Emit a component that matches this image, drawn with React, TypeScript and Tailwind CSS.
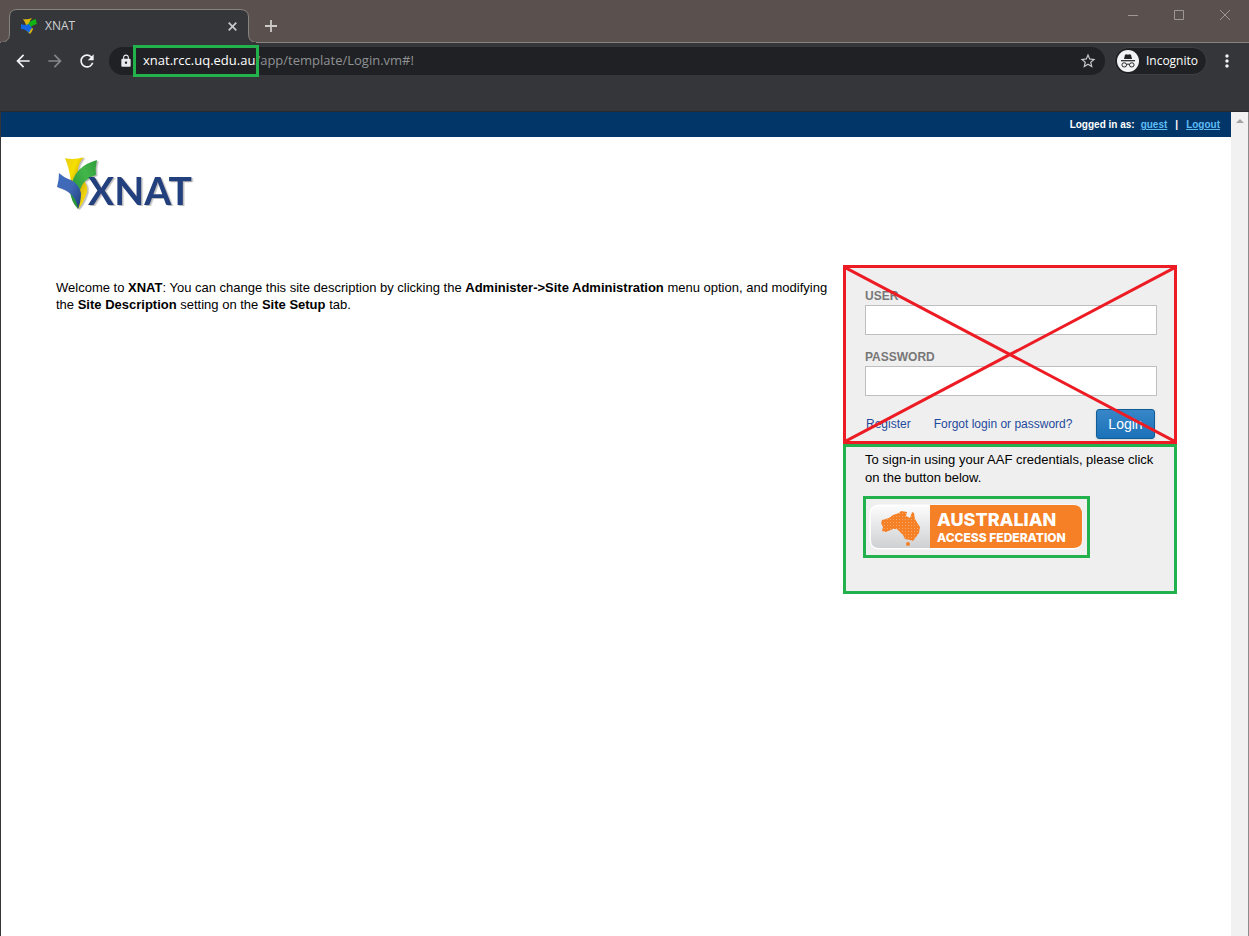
import { MdArrowBack, MdArrowForward, MdLock, MdMoreVert, MdRefresh, MdStarBorder } from "react-icons/md";

function Favicon() {
  return (
    <svg width="16" height="16" viewBox="0 0 16 16" aria-hidden="true">
      <path d="M2 1 Q6 2 11 0 Q8 3 8 7 L5 7 Q4 4 2 1Z" fill="#d9b310" />
      <path d="M8 10 Q12 9 12 11 Q11 14 9 16 Q6 14 5 11Z" fill="#d9b310" />
      <path d="M5 10 Q7 3 15 1 Q15 5 16 6 Q11 7 9 10 L8 14 Q5 13 5 10Z" fill="#12b312" />
      <path d="M0 6 Q4 8 8 6 Q9 8 11 10 Q9 12 8 15 Q5 11 0 11Z" fill="#1565e0" />
    </svg>
  );
}

function TabStrip() {
  return (
    <div className="flex h-[43px] items-stretch border-b border-[#878380] bg-[#5a514e]">
      <div className="relative ml-2 flex w-60 items-center pt-2.5 pr-2 pl-3">
        <svg className="absolute top-2 -left-2" width="257" height="35" viewBox="0 0 257 35" aria-hidden="true">
          <path
            d="M0 34.500 Q9.500 34.500 9.500 26 L9.500 9 Q9.500 1.500 17 1.500 L240 1.500 Q248.500 1.500 248.500 9 L248.500 26 Q248.500 34.500 257 34.500"
            fill="#35363a"
            stroke="#878380"
          />
          <path d="M1 35 H256" stroke="#35363a" strokeWidth="2" />
        </svg>
        <div className="relative flex w-full items-center gap-2 pl-px">
          <Favicon />
          <span className="flex-1 text-xs text-[#d0d1d3]">XNAT</span>
          <button aria-label="Close tab" className="flex size-4 items-center justify-center text-[#c8c9cb]">
            <svg width="9" height="9" viewBox="0 0 9 9" aria-hidden="true">
              <path d="M.7 .7 L8.300 8.300 M8.300 .7 L.7 8.300" stroke="currentColor" strokeWidth="1.700" />
            </svg>
          </button>
        </div>
      </div>
      <button aria-label="New tab" className="flex w-[46px] items-center justify-center pt-2.5 text-[#cccac9]">
        <svg width="12" height="12" viewBox="0 0 12 12" aria-hidden="true">
          <path d="M6 0 V12 M0 6 H12" stroke="currentColor" strokeWidth="1.800" />
        </svg>
      </button>
      <div className="mr-px ml-auto flex h-[30px] text-[#9d9795]">
        <button aria-label="Minimize" className="flex w-[46px] items-center justify-center">
          <svg width="10" height="10" viewBox="0 0 10 10" aria-hidden="true">
            <path d="M0 5.500 H10" stroke="currentColor" />
          </svg>
        </button>
        <button aria-label="Maximize" className="flex w-[46px] items-center justify-center">
          <svg width="10" height="10" viewBox="0 0 10 10" aria-hidden="true">
            <path d="M.5 .5 H9.500 V9.500 H.5Z" fill="none" stroke="currentColor" />
          </svg>
        </button>
        <button aria-label="Close window" className="flex w-[46px] items-center justify-center">
          <svg width="10" height="10" viewBox="0 0 10 10" aria-hidden="true">
            <path d="M0 0 L10 10 M10 0 L0 10" stroke="currentColor" />
          </svg>
        </button>
      </div>
    </div>
  );
}

function Toolbar() {
  return (
    <div className="flex h-[69px] items-start border-b border-[#29292c] bg-[#35363a] pt-1 pr-1.5 pl-[7px]">
      <button aria-label="Back" className="flex h-7 w-8 items-center justify-center text-[#f1f3f4]">
        <MdArrowBack size={20} />
      </button>
      <button aria-label="Forward" className="flex h-7 w-8 items-center justify-center text-[#85868a]">
        <MdArrowForward size={20} />
      </button>
      <button aria-label="Reload" className="flex h-7 w-8 items-center justify-center text-[#f1f3f4]">
        <MdRefresh size={20} />
      </button>
      <div className="ml-1.5 flex h-7 flex-1 items-center rounded-full bg-[#202124] pr-2 pl-2.5 text-[13px]">
        <MdLock size={14} className="mr-2.5 text-[#e8eaed]" />
        <span className="relative text-white">
          xnat.rcc.uq.edu.au
          <span className="pointer-events-none absolute -inset-y-1.5 -right-1 -left-2.5 border-3 border-[#22b14c]" />
        </span>
        <span className="text-[#8f9194]">/app/template/Login.vm#!</span>
        <button aria-label="Bookmark this page" className="ml-auto text-[#c6c8cb]">
          <MdStarBorder size={18} />
        </button>
      </div>
      <button className="ml-[9px] flex h-7 items-center gap-[7px] rounded-full border border-[#3f4044] bg-[#202124] pr-2 pl-0.5 text-xs text-white">
        <svg width="22" height="22" viewBox="0 0 22 22" aria-hidden="true">
          <circle cx="11" cy="11" r="11" fill="#f1f3f4" />
          <path d="M7 9 L8 4.800 Q9.500 4 11 4.700 Q12.500 4 14 4.800 L15 9Z" fill="#202124" />
          <path d="M4 10.700 H18" stroke="#202124" strokeWidth="1.200" />
          <rect x="5" y="12.900" width="4.500" height="4" rx="1.800" fill="none" stroke="#202124" />
          <rect x="12.500" y="12.900" width="4.500" height="4" rx="1.800" fill="none" stroke="#202124" />
          <path d="M9.500 14.500 Q11 13.500 12.500 14.500" fill="none" stroke="#202124" />
        </svg>
        Incognito
      </button>
      <button aria-label="Browser menu" className="ml-1 flex h-7 w-8 items-center justify-center text-[#f1f3f4]">
        <MdMoreVert size={20} />
      </button>
    </div>
  );
}

function XnatLogo() {
  return (
    <svg width="144" height="58" viewBox="0 0 144 58" role="img" aria-label="XNAT">
      <defs>
        <linearGradient id="petalYellow" x1="0" y1="0" x2="1" y2="1">
          <stop offset="0" stopColor="#e8cc0a" />
          <stop offset=".3" stopColor="#f7df05" />
          <stop offset=".55" stopColor="#c9a106" />
          <stop offset=".8" stopColor="#f0d508" />
        </linearGradient>
        <linearGradient id="petalGreen" x1="1" y1="0" x2="0" y2="1">
          <stop offset="0" stopColor="#2f9c3c" />
          <stop offset=".35" stopColor="#43b649" />
          <stop offset="1" stopColor="#1e8a32" />
        </linearGradient>
        <linearGradient id="petalBlue" x1="0" y1="0" x2="1" y2="1">
          <stop offset="0" stopColor="#3e6cc0" />
          <stop offset=".5" stopColor="#3f68b4" />
          <stop offset="1" stopColor="#1c3a78" />
        </linearGradient>
        <filter id="softShadow" x="-10%" y="-10%" width="120%" height="130%">
          <feDropShadow dx="1.500" dy="1" stdDeviation=".7" floodColor="#777777" floodOpacity=".5" />
        </filter>
      </defs>
      <g filter="url(#softShadow)">
        <path d="M9 3.300 Q18 5 28 2.300 Q22 8 22 17 Q24 24 29 27 Q33 33 30 40 Q27 49 22 54 L15 27 Q13 12 9 3.300Z" fill="url(#petalYellow)" />
        <path d="M16 28 Q20 11 41 5 Q39 13 40 20 Q27 24 24 35 L22 54 Q15 47 14 36Z" fill="url(#petalGreen)" />
        <path d="M3 18 Q8 23 15 25 Q23 29 25 38 Q25 47 22 54 Q20 37 1 32 Q3 25 3 18Z" fill="url(#petalBlue)" />
        <text x="32" y="50" fontFamily="Lato, sans-serif" fontSize="39" fontWeight="700" fill="#213f7d">
          XNAT
        </text>
      </g>
    </svg>
  );
}

function AafBadge() {
  return (
    <svg width="214" height="46" viewBox="0 0 214 46" aria-hidden="true">
      <defs>
        <linearGradient id="badgeSilver" x1="0" y1="0" x2="0" y2="1">
          <stop offset="0" stopColor="#fcfcfc" />
          <stop offset="1" stopColor="#cfd0d2" />
        </linearGradient>
        <pattern id="dots" width="3" height="3" patternUnits="userSpaceOnUse">
          <rect width="3" height="3" fill="#f58025" />
          <rect width="1" height="1" fill="#f8a868" />
        </pattern>
      </defs>
      <rect x=".5" y=".5" width="213" height="45" rx="9" fill="#ffffff" />
      <path d="M61 2 V44 H10 Q2 44 2 36 V10 Q2 2 10 2Z" fill="url(#badgeSilver)" />
      <path d="M61 1 H204 Q213 1 213 10 V36 Q213 44 204 44 H61Z" fill="#f58025" />
      <path
        d="M12 19 L13 16 L20 14 L24 11 L30 9 L32 7 L38 8 L37 12 L41 14 L43 8 L45 9 L46 15 L49 20 L51 23 L50 29 L47 33 L44 37 L41 36 L36 35 L34 31 L31 28 L28 25 L24 25 L17 28 L13 27 L14 23Z"
        fill="url(#dots)"
      />
      <circle cx="39" cy="40" r="2" fill="#f58025" />
      <g fill="#ffffff" fontFamily="Inter, sans-serif" fontWeight="800">
        <text x="68" y="22" fontSize="18">AUSTRALIAN</text>
        <text x="68" y="38" fontSize="12">ACCESS FEDERATION</text>
      </g>
    </svg>
  );
}

function Field({ id, label, type }: { id: string; label: string; type: string }) {
  return (
    <div className="flex flex-col">
      <label htmlFor={id} className="text-xs leading-[18px] font-bold text-[#777777]">
        {label}
      </label>
      <input id={id} type={type} className="h-[30px] w-full border border-[#bfbfbf] bg-white px-2 text-[13px] outline-none" />
    </div>
  );
}

function LoginPanel() {
  return (
    <aside className="w-[334px] shrink-0 bg-[#efefef]">
      <form className="relative flex flex-col gap-[13px] border-3 border-[#ed1c24] pt-[19px] pr-[17px] pb-0.5 pl-[19px]">
        <Field id="user" label="USER" type="text" />
        <Field id="password" label="PASSWORD" type="password" />
        <div className="flex items-center pr-0.5 pl-px text-xs text-[#1f4a9c]">
          <a href="#register">Register</a>
          <a href="#forgot" className="ml-[23px]">
            Forgot login or password?
          </a>
          <button
            type="button"
            className="ml-auto h-[30px] w-[59px] rounded-[3px] border border-[#0f5c96] bg-linear-to-b from-[#3786c8] to-[#1a72b8] text-sm leading-none text-white shadow-sm"
          >
            Login
          </button>
        </div>
        <svg className="pointer-events-none absolute inset-0 size-full" viewBox="0 0 328 173" preserveAspectRatio="none" aria-hidden="true">
          <path d="M0 0 L328 173 M328 0 L0 173" stroke="#ed1c24" strokeWidth="3" />
        </svg>
      </form>
      <section className="flex h-[150px] flex-col items-start border-3 border-[#22b14c] pt-1 pr-3 pl-[17px]">
        <p className="pl-0.5 text-[13px] leading-[18px]">To sign-in using your AAF credentials, please click on the button below.</p>
        <a href="#aaf" aria-label="Australian Access Federation" className="mt-[9px] border-3 border-[#22b14c] py-[5px] pr-1 pl-[3px]">
          <AafBadge />
        </a>
      </section>
    </aside>
  );
}

export default function App() {
  return (
    <div className="flex min-h-screen flex-col bg-white font-['Open_Sans','Noto_Sans',sans-serif]">
      <TabStrip />
      <Toolbar />
      <div className="flex flex-1 border-x border-l-[#35363a] border-r-[#8c8c8c] font-['Liberation_Sans',Arial,sans-serif] text-black">
        <div className="min-w-0 flex-1">
          <header className="flex h-[25px] items-center justify-end bg-[#033668] pr-[11px] text-[10px] font-bold text-white">
            <span>Logged in as:</span>
            <a href="#guest" className="ml-1.5 text-[#5dbcf5] underline">
              guest
            </a>
            <span className="mx-2">|</span>
            <a href="#logout" className="text-[#5dbcf5] underline">
              Logout
            </a>
          </header>
          <main className="pt-[18px] pr-[54px] pl-[55px]">
            <XnatLogo />
            <div className="mt-[52px] flex items-start justify-between gap-3">
              <p className="mt-3.5 flex-1 text-[13px] leading-[17px]">
                Welcome to <b>XNAT</b>: You can change this site description by clicking the <b>Administer-&gt;Site Administration</b> menu
                option, and modifying the <b>Site Description</b> setting on the <b>Site Setup</b> tab.
              </p>
              <LoginPanel />
            </div>
          </main>
        </div>
        <div className="flex w-[17px] justify-center bg-[#f1f1f1] pt-[7px]">
          <svg width="8" height="4" viewBox="0 0 8 4" aria-hidden="true">
            <path d="M0 4 L4 0 L8 4Z" fill="#a3a3a3" />
          </svg>
        </div>
      </div>
    </div>
  );
}
